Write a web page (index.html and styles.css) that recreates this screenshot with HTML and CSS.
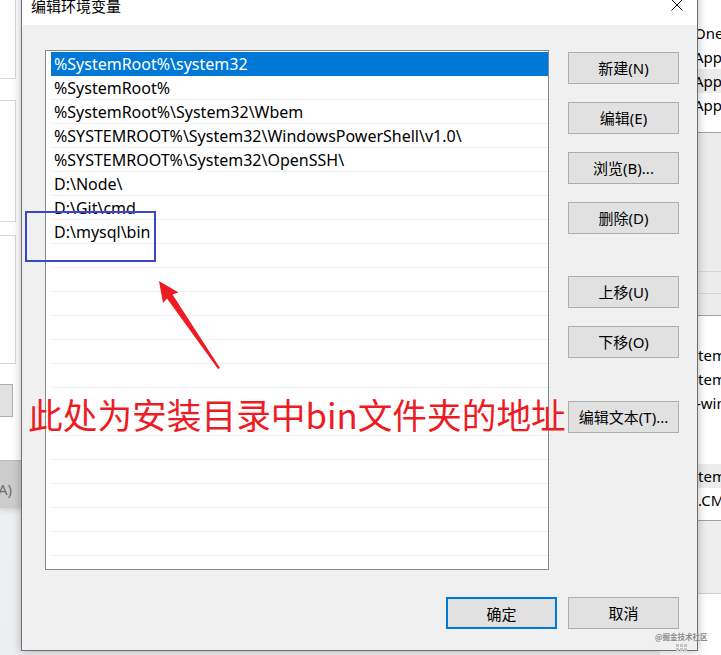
FILE: index.html
```html
<!DOCTYPE html>
<html lang="zh-CN">
<head>
<meta charset="utf-8">
<title>编辑环境变量</title>
<link rel="stylesheet" href="styles.css">
</head>
<body>
<div class="desktop">
  <div class="win-left">
    <div class="lbox lbox-a"></div>
    <div class="lbox lbox-b"></div>
    <div class="lbox lbox-c"></div>
    <div class="lbtn"></div>
    <div class="lbar"><span class="lbar-txt">A)</span></div>
  </div>

  <div class="win-right">
    <div class="rlist">
      <div class="rrow">One</div>
      <div class="rrow">App</div>
      <div class="rrow rrow-sel">App</div>
      <div class="rrow">App</div>
    </div>
    <div class="rgray">
      <div class="rgray-line"></div>
      <div class="rgray-line"></div>
    </div>
    <div class="rlist2">
      <div class="rrow rrow-in">tem</div>
      <div class="rrow rrow-in">tem</div>
      <div class="rrow rrow-dash">-win</div>
      <div class="rrow rrow-in rrow-sel rrow-gap">tem</div>
      <div class="rrow rrow-in">.CM</div>
    </div>
    <div class="rgray2"></div>
  </div>

  <div class="dialog">
    <div class="titlebar">
      <span class="title">编辑环境变量</span>
      <svg class="close" width="12" height="12" viewBox="0 0 12 12"><path d="M0.5 0.5 L11.5 11.5 M11.5 0.5 L0.5 11.5" stroke="#000" stroke-width="1" fill="none"/></svg>
    </div>
    <div class="body">
      <div class="main">
        <div class="list">
          <div class="row row-sel">%SystemRoot%\system32</div>
          <div class="row">%SystemRoot%</div>
          <div class="row">%SystemRoot%\System32\Wbem</div>
          <div class="row">%SYSTEMROOT%\System32\WindowsPowerShell\v1.0\</div>
          <div class="row">%SYSTEMROOT%\System32\OpenSSH\</div>
          <div class="row">D:\Node\</div>
          <div class="row">D:\Git\cmd</div>
          <div class="row">D:\mysql\bin</div>
          <div class="row"></div><div class="row"></div><div class="row"></div><div class="row"></div>
          <div class="row"></div><div class="row"></div><div class="row"></div><div class="row"></div>
          <div class="row"></div><div class="row"></div><div class="row"></div><div class="row"></div>
          <div class="row"></div><div class="row"></div><div class="row"></div><div class="row"></div>
        </div>
        <div class="side">
          <button class="btn">新建(N)</button>
          <button class="btn">编辑(E)</button>
          <button class="btn">浏览(B)...</button>
          <button class="btn">删除(D)</button>
          <button class="btn gap-lg">上移(U)</button>
          <button class="btn">下移(O)</button>
          <button class="btn gap-xl">编辑文本(T)...</button>
        </div>
      </div>
      <div class="footer">
        <button class="btn btn-default">确定</button>
        <button class="btn">取消</button>
      </div>
    </div>
  </div>

  <div class="annot-rect"></div>
  <svg class="annot-arrow" width="721" height="655" viewBox="0 0 721 655">
    <polygon points="159,281 178.5,292.5 172.5,294.5 220,368 218,369 167,298.5 163,303" fill="#ed1c24"/>
  </svg>
  <div class="annot-text">此处为安装目录中bin文件夹的地址</div>

  <div class="watermark">
    <span class="wm-text">@掘金技术社区</span>
    <span class="wm-grid"><i></i><i></i><i></i><i></i><i></i><i></i></span>
  </div>
</div>
</body>
</html>
```

FILE: styles.css
```css
* { box-sizing: border-box; }
body {
  margin: 0;
  font-family: "Noto Sans", "Noto Sans CJK SC", sans-serif;
  color: #000;
}
.desktop {
  position: relative;
  width: 721px;
  height: 655px;
  overflow: hidden;
  background: linear-gradient(#f5f6f8, #eceef1);
}

/* background window on the left */
.win-left {
  position: absolute;
  left: 0;
  top: 0;
  width: 40px;
  height: 508px;
  background: #fff;
  display: flex;
  flex-direction: column;
  box-shadow: 0 2px 6px rgba(0,0,0,0.15);
}
.lbox {
  width: 16px;
  border: 1px solid #d9d9d9;
  border-left: none;
  background: #fff;
}
.lbox-a { height: 79px; border-top: none; }
.lbox-b { height: 122px; margin-top: 21px; }
.lbox-c { height: 129px; margin-top: 13px; }
.lbtn {
  width: 13px;
  height: 33px;
  margin-top: 20px;
  background: #e1e1e1;
  border: 1px solid #adadad;
  border-left: none;
}
.lbar {
  margin-top: auto;
  height: 48px;
  background: #cccccc;
  border-top: 1px solid #b9b9b9;
  display: flex;
  align-items: flex-end;
  padding-bottom: 9px;
}
.lbar-txt {
  font-size: 15px;
  line-height: 20px;
  color: #707070;
  margin-left: -2px;
}

/* background window on the right */
.win-right {
  position: absolute;
  left: 660px;
  top: 0;
  width: 80px;
  height: 655px;
  background: #fff;
  display: flex;
  flex-direction: column;
  font-size: 15px;
}
.rlist { padding-top: 21px; height: 133px; border-bottom: 1px solid #a0a0a0; }
.rrow {
  height: 24px;
  line-height: 24px;
  padding-left: 34px;
  white-space: nowrap;
}
.rrow-in { padding-left: 38px; }
.rrow-dash { padding-left: 36px; }
.rrow-sel { background: #ececec; }
.rgray {
  height: 183px;
  background: #ececec;
  border-bottom: 1px solid #a0a0a0;
  display: flex;
  flex-direction: column;
  justify-content: flex-end;
}
.rgray-line { height: 22px; border-top: 1px solid #d6d6d6; }
.rlist2 {
  padding-top: 27px;
  height: 205px;
  border-bottom: 1px solid #a0a0a0;
}
.rrow-gap { margin-top: 49px; }
.rgray2 {
  height: 73px;
  background: #eeeeee;
  border-bottom: 1px solid #d0d0d0;
}

/* dialog */
.dialog {
  position: absolute;
  left: 21px;
  top: -9px;
  width: 677px;
  height: 660px;
  border: 1px solid #707070;
  background: #fff;
  display: flex;
  flex-direction: column;
  box-shadow: 0 0 9px rgba(0,0,0,0.28);
  z-index: 1;
}
.titlebar {
  height: 33px;
  background: #fff;
  display: flex;
  justify-content: space-between;
  align-items: flex-start;
  padding: 5px 14px 0 9px;
}
.title {
  font-size: 15px;
  line-height: 18px;
}
.close { margin-top: 2px; display: block; }
.body {
  flex: 1;
  background: #f0f0f0;
  padding: 25px 18px 0 23px;
  display: flex;
  flex-direction: column;
}
.main {
  display: flex;
  gap: 19px;
}
.list {
  width: 504px;
  height: 520px;
  border: 1px solid #828790;
  background: #fff;
  padding: 1px 0 0 5px;
  overflow: hidden;
}
.row {
  height: 24px;
  border-bottom: 1px solid #f0f0f0;
  padding-left: 3px;
  font-size: 16px;
  line-height: 24px;
  white-space: nowrap;
  overflow: hidden;
}
.row-sel {
  background: #0078d7;
  color: #fff;
  border-bottom-color: #0078d7;
}
.side {
  display: flex;
  flex-direction: column;
  gap: 18px;
  padding-top: 2px;
}
.btn {
  width: 111px;
  height: 32px;
  border: 1px solid #adadad;
  background: #e1e1e1;
  font-family: "Noto Sans", "Noto Sans CJK SC", sans-serif;
  font-size: 15px;
  color: #000;
  padding: 0;
  line-height: 30px;
  text-align: center;
}
.gap-lg { margin-top: 24px; }
.gap-xl { margin-top: 25px; }
.footer {
  display: flex;
  justify-content: flex-end;
  gap: 11px;
  margin-top: 27px;
}
.btn-default {
  border: 2px solid #0078d7;
}

/* annotations */
.annot-rect {
  position: absolute;
  left: 25px;
  top: 211px;
  width: 131px;
  height: 51px;
  border: 2px solid #3b47c9;
  z-index: 2;
}
.annot-arrow {
  position: absolute;
  left: 0;
  top: 0;
  z-index: 2;
}
.annot-text {
  position: absolute;
  left: 28px;
  top: 397px;
  font-family: "Noto Sans CJK SC", "Noto Sans", sans-serif;
  font-size: 34.7px;
  line-height: 1;
  color: #ed1c24;
  white-space: nowrap;
  z-index: 2;
}
.watermark {
  position: absolute;
  left: 655px;
  top: 632px;
  display: flex;
  flex-direction: column;
  align-items: center;
  gap: 2px;
  z-index: 3;
}
.wm-text {
  font-family: "Noto Sans CJK SC", sans-serif;
  font-size: 7.5px;
  line-height: 10px;
  color: #8c8c8c;
  font-weight: 700;
  white-space: nowrap;
}
.wm-grid {
  display: grid;
  grid-template-columns: repeat(3, 3px);
  gap: 1px;
}
.wm-grid i {
  width: 3px;
  height: 3px;
  background: #c4c4c4;
}
```
